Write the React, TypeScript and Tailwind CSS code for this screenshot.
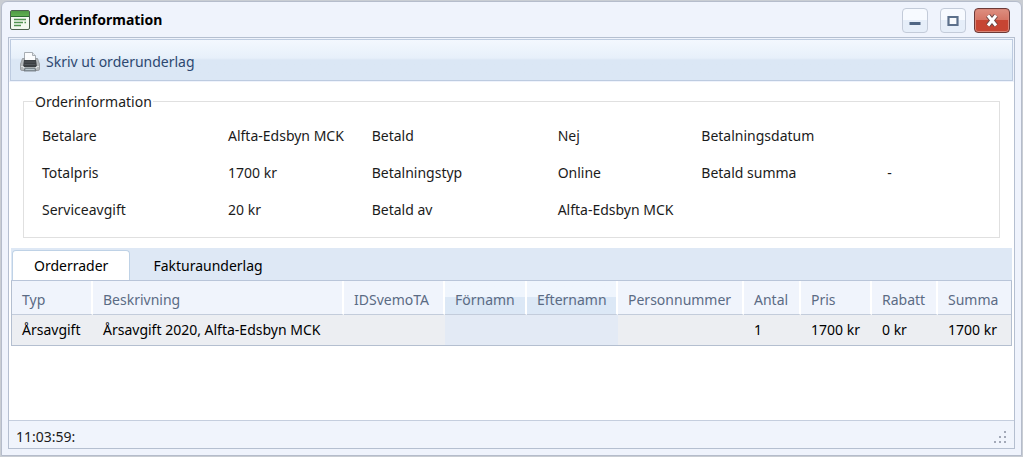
import { useState } from 'react'

type Field = { label: string; value: string }

const fields: Field[] = [
  { label: 'Betalare', value: 'Alfta-Edsbyn MCK' },
  { label: 'Betald', value: 'Nej' },
  { label: 'Betalningsdatum', value: '' },
  { label: 'Totalpris', value: '1700 kr' },
  { label: 'Betalningstyp', value: 'Online' },
  { label: 'Betald summa', value: '-' },
  { label: 'Serviceavgift', value: '20 kr' },
  { label: 'Betald av', value: 'Alfta-Edsbyn MCK' },
]

const columns = [
  { title: 'Typ', value: 'Årsavgift', width: 'w-[81px]' },
  { title: 'Beskrivning', value: 'Årsavgift 2020, Alfta-Edsbyn MCK', width: '' },
  { title: 'IDSvemoTA', value: '', width: 'w-[101px]' },
  { title: 'Förnamn', value: '', width: 'w-[82px]', sorted: true },
  { title: 'Efternamn', value: '', width: 'w-[91px]', sorted: true },
  { title: 'Personnummer', value: '', width: 'w-[126px]' },
  { title: 'Antal', value: '1', width: 'w-[57px]' },
  { title: 'Pris', value: '1700 kr', width: 'w-[71px]' },
  { title: 'Rabatt', value: '0 kr', width: 'w-[66px]' },
  { title: 'Summa', value: '1700 kr', width: 'w-[73px]' },
]

const tabs = ['Orderrader', 'Fakturaunderlag']

function FormIcon() {
  return (
    <svg width="20" height="20" viewBox="0 0 20 20" aria-hidden="true">
      <defs>
        <linearGradient id="formHead" x1="0" y1="0" x2="0" y2="1">
          <stop offset="0" stopColor="#4f9a45" />
          <stop offset="1" stopColor="#5fb04f" />
        </linearGradient>
      </defs>
      <rect x="0.5" y="0.5" width="19" height="19" rx="1.5" fill="#f3f9f1" stroke="#4c604e" />
      <path d="M1 1h18v5H1z" fill="url(#formHead)" />
      <path d="M1 6.5h18" stroke="#2c6b31" />
      <path d="M4 9.5h12M4 12.5h9M14.500 12.500h1.500M4 15.5h7" stroke="#4f9350" strokeWidth="1.4" />
    </svg>
  )
}

function PrinterIcon() {
  return (
    <svg width="20" height="20" viewBox="0 0 20 20" aria-hidden="true">
      <path d="M4.500 9V.5h8l3 3V9z" fill="#fbfcfd" stroke="#a7adb3" />
      <path d="M12.500.5v3h3" fill="#e3e7ea" stroke="#a7adb3" />
      <path d="M2.500 6.500h2v2h11v-2h2l2 5.500v5q0 1.500-1.500 1.500H2Q.5 18.500.5 17v-5z" fill="#b4b8bb" stroke="#909498" strokeWidth="0.8" />
      <path d="M4 8h12l1 7H3z" fill="#3c3f43" />
      <path d="M4.500 10h11M4.500 12.500h11" stroke="#5b6065" strokeWidth="0.7" />
      <path d="M1 14.500h2.500v1.500h13v-1.500H19" fill="none" stroke="#dfe2e4" />
      <path d="M5 16h10l1 3H4z" fill="#8b98a1" stroke="#6d7479" strokeWidth="0.8" />
      <path d="M5.500 17.500h9" stroke="#c9d3da" strokeWidth="0.8" />
    </svg>
  )
}

export default function App() {
  const [activeTab, setActiveTab] = useState('Orderrader')

  return (
    <div className="min-h-screen flex bg-[#c9cdd3] p-px font-['Noto_Sans',sans-serif] text-sm text-[#1b1b1b]">
      <main className="flex-1 min-w-0 flex flex-col rounded-t-md border border-[#b5bccb] bg-[#eff3fc] px-1.5 pb-1.5">
        <header className="flex items-center h-[35px] px-0.5">
          <FormIcon />
          <h1 className="ml-2 flex-1 font-bold text-black">Orderinformation</h1>
          <div className="flex items-center gap-3 pt-0.5 pr-[3px]">
            <button type="button" aria-label="Minimera" className="w-[26px] h-[25px] flex items-center justify-center rounded border border-[#c3cbd9] bg-linear-to-b from-[#f7faff] from-50% to-[#e6eef9] to-50%">
              <svg width="12" height="12" viewBox="0 0 12 12">
                <path d="M0.500 7h11v3h-11z" fill="#4e6583" />
              </svg>
            </button>
            <button type="button" aria-label="Maximera" className="w-[26px] h-[25px] flex items-center justify-center rounded border border-[#c3cbd9] bg-linear-to-b from-[#f7faff] from-50% to-[#e6eef9] to-50%">
              <svg width="12" height="12" viewBox="0 0 12 12">
                <path d="M1.500 2h9v8h-9z" fill="#f8fafd" stroke="#5c708b" strokeWidth="2.200" />
              </svg>
            </button>
            <button type="button" aria-label="Stäng" className="-ml-1 w-9 h-[25px] flex items-center justify-center rounded border border-[#6b3a38] bg-linear-to-b from-[#dd8f80] via-[#d47363] via-50% to-[#c64533] to-50% inset-ring inset-ring-[#d98577]">
              <svg width="14" height="13" viewBox="0 0 14 13">
                <path d="M3 1.500l8 10M11 1.500l-8 10" stroke="#6b4946" strokeWidth="5" />
                <path d="M3 1.500l8 10M11 1.500l-8 10" stroke="#fff" strokeWidth="3" />
              </svg>
            </button>
          </div>
        </header>

        <div className="flex-1 flex flex-col border border-[#b5bfd0] bg-white">
          <div className="p-px bg-[#eff3fc]">
            <div className="flex items-center h-[42px] border border-[#bdcbe0] bg-linear-to-b from-[#f3f8fe] via-[#e7f0fa] via-45% to-[#dbe7f5] to-50% px-2 pt-1">
              <button type="button" className="ml-px flex items-center gap-1.5 text-[#2d4870]">
                <PrinterIcon />
                Skriv ut orderunderlag
              </button>
            </div>
          </div>

          <fieldset className="mx-3.5 mt-[9px] mb-2.5 border border-[#e0e0e0] px-[9px] pt-[5px] pb-[9px]">
            <legend className="ml-px px-px leading-[21px]">Orderinformation</legend>
            <dl className="grid grid-cols-[330fr_330fr_289fr] pl-[9px]">
              {fields.map((field) => (
                <div key={field.label} className="grid grid-cols-[186px_1fr] items-center h-[37px] whitespace-nowrap">
                  <dt>{field.label}</dt>
                  <dd>{field.value}</dd>
                </div>
              ))}
            </dl>
          </fieldset>

          <div className="px-0.5">
            <div role="tablist" className="flex items-end h-[33px] bg-[#dee8f5] border-b border-[#b9c5d9]">
              {tabs.map((tab) => (
                <button
                  key={tab}
                  type="button"
                  role="tab"
                  aria-selected={activeTab === tab}
                  onClick={() => setActiveTab(tab)}
                  className={`h-[30px] ml-px border border-b-0 px-[21px] text-black ${
                    activeTab === tab ? 'rounded-t-sm border-[#bfd2e6] bg-white' : 'border-transparent'
                  }`}
                >
                  {tab}
                </button>
              ))}
            </div>

            <table className="w-full table-fixed border-separate border-spacing-0 border-x border-b border-[#b4bfd0] text-left whitespace-nowrap">
              <thead>
                <tr>
                  {columns.map((col) => (
                    <th
                      key={col.title}
                      className={`h-[34px] pl-2.5 pt-1 border-b border-b-[#c3ccdb] border-r-2 border-r-white last:border-r-0 font-normal text-[#5b6b84] ${col.width} ${
                        col.sorted ? 'bg-linear-to-b from-[#eff5fd] from-50% to-[#dce8f6] to-50%' : 'bg-[#f0f4fc]'
                      }`}
                    >
                      {col.title}
                    </th>
                  ))}
                </tr>
              </thead>
              <tbody>
                <tr>
                  {columns.map((col) => (
                    <td key={col.title} className={`h-[30px] pl-2.5 text-black ${col.sorted ? 'bg-[#e3eaf5]' : 'bg-[#eceef2]'}`}>
                      {col.value}
                    </td>
                  ))}
                </tr>
              </tbody>
            </table>
          </div>

          <footer className="mt-auto flex items-center justify-between h-7 border-t border-[#c5cede] bg-[#f0f4fc] pt-1 pl-[7px] pr-[7px]">
            <span>11:03:59:</span>
            <svg width="14" height="14" viewBox="0 0 14 14" fill="#a3a9b8" aria-hidden="true">
              <path d="M11 1h2v2h-2zM6 6h2v2H6zM11 6h2v2h-2zM1 11h2v2H1zM6 11h2v2H6zM11 11h2v2h-2z" />
            </svg>
          </footer>
        </div>
      </main>
    </div>
  )
}
